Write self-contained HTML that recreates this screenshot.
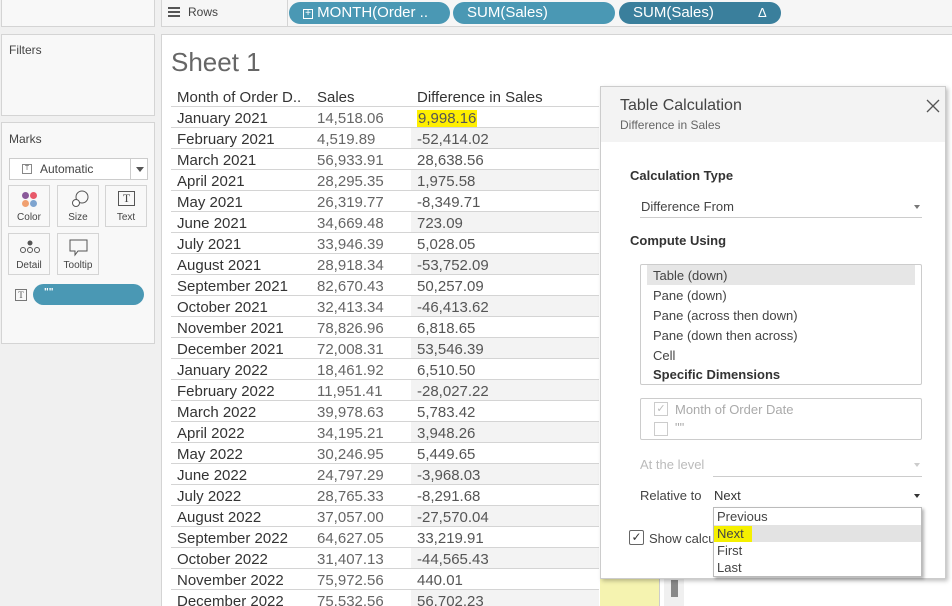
<!DOCTYPE html>
<html><head><meta charset="utf-8"><style>
*{box-sizing:border-box;margin:0;padding:0}
html,body{width:952px;height:606px;overflow:hidden}
body{background:#f0f0f0;font-family:"Liberation Sans",sans-serif;position:relative;color:#333}
.a{position:absolute}
.panel{position:absolute;background:#f8f8f8;border:1px solid #d4d4d4}
.pill{position:absolute;top:2px;height:22px;border-radius:11px;background:#4a98b4;color:#fff;font-size:15px;line-height:22px;padding-left:14px}
.row{position:absolute;left:171px;width:428px;height:21px;border-bottom:1px solid #d4d4d4;font-size:15px;line-height:20px}
.row span{position:absolute;top:2px}
.row span.d{top:0;padding-top:2px}
.m{left:6px;color:#333}
.s{left:146px;color:#666}
.d{left:240px;width:188px;height:20px;padding-left:6px;color:#555}
.sh{background:#f3f3f3}
.btn{position:absolute;width:42px;height:42px;border:1px solid #d4d4d4;background:#f8f8f8;font-size:10px;color:#444;text-align:center}
.btn div.l{position:absolute;bottom:3px;width:100%}
.dl{font-size:13px;color:#444;position:absolute;left:653px}
</style></head><body>
<div class="panel" style="left:1px;top:-1px;width:154px;height:28px"></div>
<div class="panel" style="left:1px;top:34px;width:154px;height:82px"><div class="a" style="left:7px;top:8px;font-size:12px;color:#444">Filters</div></div>
<div class="panel" style="left:1px;top:122px;width:154px;height:222px">
<div class="a" style="left:7px;top:9px;font-size:12px;color:#444">Marks</div>
<div class="a" style="left:7px;top:35px;width:139px;height:22px;border:1px solid #ccc;background:#fff">
<div class="a" style="left:12px;top:5px;width:10px;height:10px;border:1px solid #888;font-size:7px;line-height:8px;text-align:center;color:#666">T</div>
<div class="a" style="left:30px;top:3px;font-size:12px;color:#444">Automatic</div>
<div class="a" style="left:120px;top:0;width:1px;height:20px;background:#ccc"></div>
<div class="a" style="left:126px;top:8px;border:4px solid transparent;border-top:5px solid #555"></div></div>
</div>
<div class="btn" style="left:8px;top:185px"><svg class="a" style="left:12px;top:5px" width="18" height="18"><circle cx="4.5" cy="4.5" r="3.5" fill="#8a5a9a"/><circle cx="12.5" cy="4.5" r="3.5" fill="#e8596a"/><circle cx="4.5" cy="12.5" r="3.5" fill="#f0a070"/><circle cx="12.5" cy="12.5" r="3.5" fill="#7ea4cf"/></svg><div class="l">Color</div></div>
<div class="btn" style="left:57px;top:185px"><svg class="a" style="left:12px;top:3px" width="20" height="20"><circle cx="12" cy="8" r="6" fill="none" stroke="#555"/><circle cx="6" cy="14" r="3.5" fill="#fff" stroke="#555"/></svg><div class="l">Size</div></div>
<div class="btn" style="left:105px;top:185px"><div class="a" style="left:12px;top:5px;width:17px;height:15px;border:1px solid #555;font-size:12px;line-height:13px;font-family:'Liberation Serif',serif">T</div><div class="l">Text</div></div>
<div class="btn" style="left:8px;top:233px"><svg class="a" style="left:10px;top:5px" width="22" height="16"><circle cx="11" cy="4" r="2.5" fill="#555"/><circle cx="4" cy="11" r="2.5" fill="none" stroke="#555"/><circle cx="11" cy="11" r="2.5" fill="none" stroke="#555"/><circle cx="18" cy="11" r="2.5" fill="none" stroke="#555"/></svg><div class="l">Detail</div></div>
<div class="btn" style="left:57px;top:233px"><svg class="a" style="left:11px;top:5px" width="20" height="18"><path d="M1 1H18V12H9L6 16V12H1Z" fill="none" stroke="#555"/></svg><div class="l">Tooltip</div></div>
<div class="a" style="left:15px;top:289px;width:12px;height:12px;border:1px solid #777;font-size:9px;line-height:10px;text-align:center;color:#555;font-family:'Liberation Serif',serif">T</div>
<div class="a" style="left:33px;top:284px;width:111px;height:21px;border-radius:11px;background:#4a98b4;color:#fff;font-size:10px;padding:3px 11px;font-weight:bold">""</div>

<div class="panel" style="left:161px;top:-1px;width:792px;height:28px;background:#f6f6f6">
<div class="a" style="left:6px;top:7px;width:12px;height:11px;background:repeating-linear-gradient(#555 0 2px,transparent 2px 4px)"></div>
<div class="a" style="left:26px;top:5px;font-size:12px;color:#444">Rows</div>
<div class="a" style="left:125px;top:0;width:1px;height:27px;background:#d4d4d4"></div>
</div>
<div class="pill" style="left:289px;width:161px"><span style="display:inline-block;width:10px;height:10px;border:1px solid #fff;font-size:10px;line-height:8px;text-align:center;vertical-align:1px">+</span> MONTH(Order ..</div>
<div class="pill" style="left:453px;width:162px">SUM(Sales)</div>
<div class="pill" style="left:619px;width:162px;background:#3a7f9c">SUM(Sales)<span class="a" style="left:139px;font-size:13px">Δ</span></div>

<div class="a" style="left:161px;top:34px;width:791px;height:572px;background:#fff;border-left:1px solid #d4d4d4;border-top:1px solid #d4d4d4"></div>
<div class="a" style="left:171px;top:47px;font-size:26px;color:#666">Sheet 1</div>
<div class="row" style="top:86px"><span class="m">Month of Order D..</span><span class="s" style="color:#333">Sales</span><span class="d" style="color:#333">Difference in Sales</span></div>
<div id="rows"></div>
<script>
var d=[["January 2021","14,518.06","9,998.16"],["February 2021","4,519.89","-52,414.02"],["March 2021","56,933.91","28,638.56"],["April 2021","28,295.35","1,975.58"],["May 2021","26,319.77","-8,349.71"],["June 2021","34,669.48","723.09"],["July 2021","33,946.39","5,028.05"],["August 2021","28,918.34","-53,752.09"],["September 2021","82,670.43","50,257.09"],["October 2021","32,413.34","-46,413.62"],["November 2021","78,826.96","6,818.65"],["December 2021","72,008.31","53,546.39"],["January 2022","18,461.92","6,510.50"],["February 2022","11,951.41","-28,027.22"],["March 2022","39,978.63","5,783.42"],["April 2022","34,195.21","3,948.26"],["May 2022","30,246.95","5,449.65"],["June 2022","24,797.29","-3,968.03"],["July 2022","28,765.33","-8,291.68"],["August 2022","37,057.00","-27,570.04"],["September 2022","64,627.05","33,219.91"],["October 2022","31,407.13","-44,565.43"],["November 2022","75,972.56","440.01"],["December 2022","75,532.56","56,702.23"]];
var h="";d.forEach(function(r,i){var y=107+i*21;var diff=i==0?'<span class="d"><span style="position:static;background:#ffef00;padding:0 1px">'+r[2]+'</span></span>':'<span class="d'+(i%2?' sh':'')+'">'+r[2]+'</span>';h+='<div class="row" style="top:'+y+'px"><span class="m">'+r[0]+'</span><span class="s">'+r[1]+'</span>'+diff+'</div>';});
document.getElementById("rows").innerHTML=h;
</script>
<div class="a" style="left:600px;top:578px;width:60px;height:28px;background:#f5f3b0;border-right:1px solid #ccc"></div>
<div class="a" style="left:664px;top:578px;width:20px;height:28px;background:#f0f0f0"></div>
<div class="a" style="left:671px;top:580px;width:7px;height:17px;background:#888"></div>

<div class="a" style="left:600px;top:86px;width:346px;height:493px;background:#fff;border:1px solid #ccc;box-shadow:2px 2px 4px rgba(0,0,0,.25)">
<div class="a" style="left:0;top:0;width:344px;height:55px;background:#f3f3f3"></div>
<div class="a" style="left:19px;top:10px;font-size:16px;color:#444">Table Calculation</div>
<div class="a" style="left:19px;top:31px;font-size:12px;color:#666">Difference in Sales</div>
<svg class="a" style="left:325px;top:12px" width="14" height="14"><path d="M1 1L13 13M13 1L1 13" stroke="#555" stroke-width="1.3"/></svg>
</div>
<div class="a" style="left:630px;top:168px;font-size:13px;font-weight:bold;color:#333">Calculation Type</div>
<div class="dl" style="left:641px;top:199px">Difference From</div>
<div class="a" style="left:640px;top:217px;width:282px;height:1px;background:#ccc"></div>
<div class="a" style="left:914px;top:205px;border:3px solid transparent;border-top:4px solid #777"></div>
<div class="a" style="left:630px;top:233px;font-size:13px;font-weight:bold;color:#333">Compute Using</div>
<div class="a" style="left:640px;top:264px;width:282px;height:121px;border:1px solid #ccc;border-radius:2px"></div>
<div class="a" style="left:647px;top:265px;width:268px;height:20px;background:#e6e6e6"></div>
<div class="dl" style="top:268px">Table (down)</div>
<div class="dl" style="top:288px">Pane (down)</div>
<div class="dl" style="top:308px">Pane (across then down)</div>
<div class="dl" style="top:328px">Pane (down then across)</div>
<div class="dl" style="top:348px">Cell</div>
<div class="dl" style="top:367px;font-weight:bold;color:#333">Specific Dimensions</div>
<div class="a" style="left:640px;top:398px;width:282px;height:42px;border:1px solid #ccc;border-radius:2px"></div>
<div class="a" style="left:654px;top:402px;width:14px;height:14px;border:1px solid #ccc;color:#bbb;font-size:11px;line-height:12px;text-align:center">✓</div>
<div class="dl" style="left:675px;top:402px;color:#aaa">Month of Order Date</div>
<div class="a" style="left:654px;top:422px;width:14px;height:14px;border:1px solid #ccc"></div>
<div class="dl" style="left:675px;top:420px;color:#aaa">""</div>
<div class="dl" style="left:640px;top:457px;color:#bbb">At the level</div>
<div class="a" style="left:713px;top:476px;width:209px;height:1px;background:#ccc"></div>
<div class="a" style="left:914px;top:463px;border:3px solid transparent;border-top:4px solid #ccc"></div>
<div class="dl" style="left:640px;top:488px">Relative to</div>
<div class="dl" style="left:714px;top:488px;color:#333">Next</div>
<div class="a" style="left:914px;top:494px;border:3px solid transparent;border-top:4px solid #333"></div>
<div class="a" style="left:629px;top:530px;width:15px;height:15px;border:1px solid #666;border-radius:2px;font-size:12px;line-height:13px;text-align:center">✓</div>
<div class="dl" style="left:649px;top:531px">Show calcu</div>
<div class="a" style="left:713px;top:507px;width:209px;height:70px;background:#fff;border:1px solid #bbb;box-shadow:2px 2px 3px rgba(0,0,0,.3)"></div>
<div class="a" style="left:714px;top:525px;width:207px;height:17px;background:#e3e3e3"></div>
<div class="a" style="left:714px;top:526px;width:38px;height:16px;background:#f5f000"></div>
<div class="dl" style="left:717px;top:509px">Previous</div>
<div class="dl" style="left:717px;top:526px">Next</div>
<div class="dl" style="left:717px;top:543px">First</div>
<div class="dl" style="left:717px;top:560px">Last</div>
</body></html>
